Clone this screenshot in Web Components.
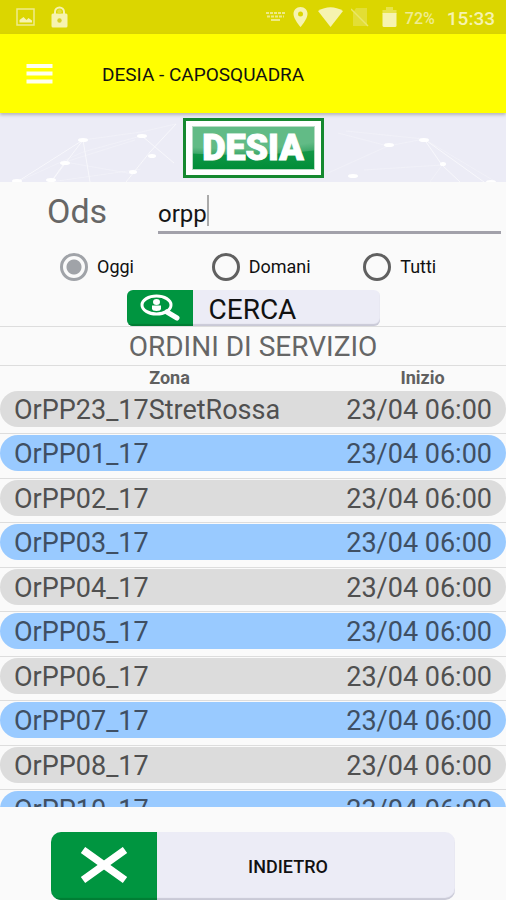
<!DOCTYPE html>
<html lang="it">
<head>
<meta charset="utf-8">
<meta name="viewport" content="width=device-width, initial-scale=1">
<title>DESIA - CAPOSQUADRA</title>
<style>
html, body { margin: 0; height: 100%; }
body { font-family: Roboto, "Liberation Sans", sans-serif; background: #fafafa; color: #111; }
</style>
</head>
<body>
<desia-app></desia-app>
<script>
const define = (name, html, setup) => {
  const template = document.createElement('template');
  template.innerHTML = html;
  customElements.define(name, class extends HTMLElement {
    constructor() {
      super();
      this.attachShadow({ mode: 'open' }).append(template.content.cloneNode(true));
    }
    connectedCallback() { if (setup) setup(this, this.shadowRoot); }
  });
};

define('status-bar', `
<style>
:host { display: flex; align-items: center; justify-content: space-between; height: 34px; padding: 0 11px 0 16px; box-sizing: border-box; background: #dbd600; color: #f6f3b0; }
.group { display: flex; align-items: center; }
.left { gap: 16px; }
svg { display: block; flex: none; }
.pin { margin-left: 8px; } .wifi { margin-left: 10px; } .sim { margin-left: 8px; } .bat { margin-left: 13px; }
.pct { font-size: 16px; font-weight: 500; margin-left: 8px; color: #efec91; }
.time { font-size: 19px; font-weight: 500; margin-left: 12px; }
.pct, .time { padding-top: 2px; }
</style>
<div class="group left">
  <svg width="19" height="18" viewBox="0 0 19 18"><path d="M1 1h17v16H1z" fill="none" stroke="#efeb8c" stroke-width="1.5"/><path d="M3.5 14.5V12l4-3 3 3 2-2 3.500 2.500v2z" fill="#f6f3b0"/></svg>
  <svg width="17" height="22" viewBox="0 0 17 22"><path d="M4 8V6a4.500 4.500 0 0 1 9 0v2" fill="none" stroke="#f6f3b0" stroke-width="2"/><path d="M2 7.500h13q1.500 0 1.500 1.500v11q0 1.500-1.500 1.500H2Q.5 21.500.5 20V9Q.5 7.500 2 7.500z" fill="#f6f3b0"/><circle cx="8.500" cy="5.500" r="2.200" fill="#e5e13c"/><circle cx="8.500" cy="14.500" r="2.200" fill="#d7d12a"/></svg>
</div>
<div class="group">
  <svg width="19" height="12" viewBox="0 0 19 12" fill="none" stroke="#eeea85" stroke-width="2"><path d="M0 2h19" stroke-dasharray="3 1"/><path d="M1 5.500h17" stroke-dasharray="3 1"/><path d="M5 9h9"/></svg>
  <svg class="pin" width="15" height="20" viewBox="0 0 15 20"><path d="M7.500 0C3.300 0 .5 3 .5 7c0 5 7 13 7 13s7-8 7-13c0-4-2.800-7-7-7z" fill="#f6f3b0"/><circle cx="7.500" cy="7" r="2.500" fill="#dbd600"/></svg>
  <svg class="wifi" width="25" height="20" viewBox="0 0 25 20"><path d="M0 4Q12.500-3.500 25 4L12.500 20z" fill="#f6f3b0"/></svg>
  <svg class="sim" width="18" height="20" viewBox="0 0 18 20"><path d="M5 1h11v18H2V6z" fill="#e2de35"/><path d="M0 2l17 17" stroke="#eae669" stroke-width="1.500"/></svg>
  <svg class="bat" width="15" height="20" viewBox="0 0 15 20"><path d="M4 0h7v3h3.500v4H.5V3H4z" fill="#e7e34a"/><path d="M.5 6h14v12.500q0 1.500-1.500 1.500H2Q.5 20 .5 18.500z" fill="#f6f3b0"/></svg>
  <span class="pct">72%</span><span class="time">15:33</span>
</div>`);

define('app-bar', `
<style>
:host { display: flex; align-items: center; gap: 43px; height: 79px; padding: 0 20px; box-sizing: border-box; background: #ffff00; box-shadow: 0 2px 3px #8888; position: relative; }
button { border: 0; background: none; width: 39px; height: 48px; padding: 6px; cursor: pointer; }
svg { display: block; }
h1 { margin: 0; padding-top: 2px; font-size: 19px; font-weight: 400; }
</style>
<button type="button" aria-label="Menu"><svg width="27" height="36" viewBox="0 0 27 36"><path d="M.5 10h26M.5 17.500h26M.5 25.500h26" stroke="#fffff0" stroke-width="4"/></svg></button>
<h1><slot></slot></h1>`);

define('brand-banner', `
<style>
:host { display: grid; place-items: center; height: 69px; background: #ececf6; }
.net, .logo { grid-area: 1 / 1; }
.net { width: 100%; height: 69px; }
.logo { box-sizing: border-box; width: 141px; height: 60px; border: 3px solid #15892f; background: #fff; padding: 5px 6px; }
.plate { box-sizing: border-box; height: 44px; border: 1px solid #b7dcc4; display: grid; place-items: center; background: radial-gradient(ellipse 110% 52% at 35% 15%, #62bb86 0 70%, #3fa96b 96%, #0000 100%), linear-gradient(#2ba25b, #008e38); color: #fff; font-size: 36px; line-height: 42px; font-weight: 900; -webkit-text-stroke: 1px #fff; }
</style>
<svg class="net" viewBox="0 0 506 69" preserveAspectRatio="none" aria-hidden="true">
  <g fill="none" stroke="#f8f8fc"><path d="M17 69L83 27 51 69 65 49M83 27l7 42M126 69l24-30 26-28M142 23l32 27" stroke-width=".9"/><path d="M17 69l66-30 58-16M83 27l58-8 35-8M65 49l70-22M65 49l68 12M51 69l90-13M328 60l60-27 36-7 72 43M442 52l-12 17M442 52l-78 5M424 26l-78-8M388 33l-50-13" stroke-width=".7" opacity=".5"/><path d="M424 26l18 26 18 17M424 26l60 43" stroke-width=".9"/></g>
  <g fill="#fff"><ellipse cx="17" cy="68" rx="5" ry="2"/><ellipse cx="51" cy="67" rx="5" ry="2"/><ellipse cx="65" cy="50" rx="5" ry="2"/><ellipse cx="83" cy="27" rx="5" ry="2"/><ellipse cx="142" cy="23" rx="5" ry="2"/><ellipse cx="152" cy="43" rx="4" ry="2"/><ellipse cx="133" cy="59" rx="4" ry="2"/><ellipse cx="353" cy="63" rx="5" ry="2"/><ellipse cx="389" cy="32" rx="5" ry="2"/><ellipse cx="424" cy="27" rx="5" ry="2"/><ellipse cx="443" cy="51" rx="3" ry="2"/><ellipse cx="491" cy="69" rx="5" ry="2"/></g>
</svg>
<div class="logo"><div class="plate">DESIA</div></div>`);

define('icon-button', `
<style>
:host { display: block; --h: 36px; --icon: 66px; --r: 6px; --size: 28px; }
:host([large]) { --h: 68px; --icon: 106px; --r: 10px; --size: 18px; }
button { display: flex; width: 100%; height: var(--h); padding: 0; border: 0; border-radius: var(--r); overflow: hidden; background: #ececf6; color: #111; font: 400 var(--size) Roboto, sans-serif; box-shadow: inset 0 -2px 1px #c9c9d6; cursor: pointer; }
.icon { width: var(--icon); height: 100%; display: grid; place-items: center; background: #009540; flex: none; box-shadow: inset 0 -2px 1px #007d34; }
.label { flex: 1; align-self: center; text-align: left; padding: 3px 0 0 16px; }
:host([large]) .label { text-align: center; padding: 0 36px 0 0; font-weight: 500; }
</style>
<button type="button"><span class="icon"><slot name="icon"></slot></span><span class="label"><slot></slot></span></button>`);

define('search-form', `
<style>
:host { display: block; padding: 8px 0 0; }
.field { display: grid; grid-template-columns: 158fr 348fr; height: 46px; }
.field label { justify-self: start; padding-left: 47px; font-size: 34px; line-height: 42px; color: #666; }
.box { display: flex; align-items: center; margin-right: 5px; border-bottom: 3px solid #a2a1aa; box-sizing: border-box; height: 44px; }
input[type=text] { field-sizing: content; min-width: 0; border: 0; padding: 6px 0 0; outline: 0; background: none; font: 24px Roboto, sans-serif; color: #151515; }
.caret { width: 2px; height: 31px; background: #aaa; }
fieldset { display: grid; grid-template-columns: repeat(3, 34%); align-items: center; border: 0; margin: 0; padding: 8px 0 0 60px; height: 45px; }
fieldset label { display: flex; align-items: center; gap: 9px; font-size: 18px; }
input[type=radio] { appearance: none; flex: none; box-sizing: border-box; width: 28px; height: 28px; margin: 0; border: 3px solid #606060; border-radius: 50%; }
input[type=radio]:checked { border-color: #a0a3a8; background: radial-gradient(circle, #a0a3a8 0 7px, #0000 8px); }
icon-button { width: 50%; margin: 1px auto 0; }
</style>
<form>
  <div class="field"><label for="ods">Ods</label><div class="box"><input id="ods" type="text" value="orpp"><span class="caret"></span></div></div>
  <fieldset>
    <label><input type="radio" name="day" checked>Oggi</label>
    <label><input type="radio" name="day">Domani</label>
    <label><input type="radio" name="day">Tutti</label>
  </fieldset>
  <icon-button>
    <svg slot="icon" width="42" height="30" viewBox="0 0 42 30"><ellipse cx="17.500" cy="12" rx="14.500" ry="9" fill="none" stroke="#fff" stroke-width="3"/><path d="M28 19l10 6" stroke="#fff" stroke-width="5" stroke-linecap="round"/><ellipse cx="17.500" cy="9" rx="3.500" ry="3" fill="#fff"/><path d="M13 12.500h9v3q0 2.500-4.500 2.500T13 15.500z" fill="#fff"/></svg>
    CERCA</icon-button>
</form>`);

define('order-list', `
<style>
:host { display: block; flex: 1; min-height: 0; overflow: auto; scrollbar-width: none; }
table { width: 100%; border-collapse: separate; border-spacing: 0; table-layout: fixed; color: #555; }
caption { border-top: 1px solid #ddd; border-bottom: 1px solid #ddd; font-size: 28px; line-height: 40px; height: 38px; color: #666; }
th { height: 24px; padding: 0; font-size: 18px; line-height: 24px; font-weight: 700; color: #606060; }
th:first-child { width: 67%; }
td { padding: 1px 0 6px; border-bottom: 1px solid #ddd; font-size: 27px; line-height: 38px; color: #505050; white-space: nowrap; }
tr:nth-child(even) td { padding-bottom: 7px; }
span { display: block; height: 36px; padding: 0 14px; background: #dcdcdc; }
tr:nth-child(even) span { background: #99caff; color: #3f4f63; }
td:first-child span { border-radius: 18px 0 0 18px; }
td:last-child span { border-radius: 0 18px 18px 0; padding-left: 0; text-align: right; }
</style>
<table><caption>ORDINI DI SERVIZIO</caption>
<thead><tr><th scope="col">Zona</th><th scope="col">Inizio</th></tr></thead><tbody></tbody></table>`,
(host, root) => {
  const body = root.querySelector('tbody');
  if (body.rows.length) return;
  for (const zone of ['OrPP23_17StretRossa', 'OrPP01_17', 'OrPP02_17', 'OrPP03_17', 'OrPP04_17', 'OrPP05_17', 'OrPP06_17', 'OrPP07_17', 'OrPP08_17', 'OrPP10_17']) {
    const row = body.insertRow();
    for (const text of [zone, '23/04 06:00']) {
      const pill = document.createElement('span');
      pill.textContent = text;
      row.insertCell().append(pill);
    }
  }
});

define('desia-app', `
<style>
:host { display: flex; flex-direction: column; height: 100%; overflow: hidden; }
status-bar, app-bar, brand-banner, search-form, footer { flex: none; }
footer { padding: 25px 10% 0; }
</style>
<status-bar></status-bar>
<app-bar>DESIA - CAPOSQUADRA</app-bar>
<brand-banner></brand-banner>
<search-form></search-form>
<order-list></order-list>
<footer><icon-button large>
  <svg slot="icon" width="48" height="38" viewBox="0 0 48 38"><path d="M3 3l42 30M45 3L3 33" stroke="#fff" stroke-width="7.500"/></svg>
  INDIETRO</icon-button></footer>`);
</script>
</body>
</html>
